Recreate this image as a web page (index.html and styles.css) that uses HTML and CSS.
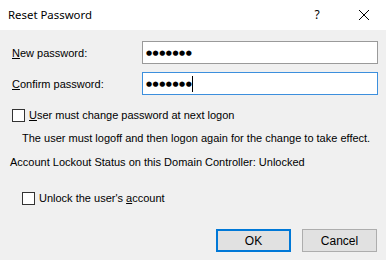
FILE: index.html
```html
<!DOCTYPE html>
<html>
<head>
<meta charset="utf-8">
<link rel="stylesheet" href="styles.css">
</head>
<body>
<div class="dialog">
  <div class="titlebar">
    <span class="title">Reset Password</span>
    <span class="help">?</span>
    <svg class="close" width="12" height="12" viewBox="0 0 12 12"><path d="M1 1 L11 11 M11 1 L1 11" stroke="#000" stroke-width="1" fill="none"/></svg>
  </div>
  <div class="content">
    <div class="field">
      <label class="label"><u>N</u>ew password:</label>
      <div class="input"><span class="dots">●●●●●●●</span></div>
    </div>
    <div class="field second">
      <label class="label"><u>C</u>onfirm password:</label>
      <div class="input focused"><span class="dots">●●●●●●●</span><span class="caret"></span></div>
    </div>
    <div class="check first-check">
      <span class="box"></span><span><u>U</u>ser must change password at next logon</span>
    </div>
    <div class="note">The user must logoff and then logon again for the change to take effect.</div>
    <div class="status">Account Lockout Status on this Domain Controller: Unlocked</div>
    <div class="check unlock">
      <span class="box"></span><span>Unlock the user's <u>a</u>ccount</span>
    </div>
    <div class="buttons">
      <button class="btn default">OK</button>
      <button class="btn">Cancel</button>
    </div>
  </div>
</div>
</body>
</html>
```
FILE: styles.css
```css
html, body {
  margin: 0;
  padding: 0;
}
body {
  width: 386px;
  height: 260px;
  overflow: hidden;
  background: #f0f0f0;
  font-family: "Liberation Sans", Arial, sans-serif;
  font-size: 11px;
  color: #000;
}
.dialog {
  width: 386px;
  height: 260px;
  display: flex;
  flex-direction: column;
}
.titlebar {
  flex-shrink: 0;
  height: 30px;
  background: #fff;
  display: flex;
  align-items: center;
  padding-left: 8px;
  box-sizing: border-box;
}
.title {
  flex: 1;
  font-family: "Noto Sans", "Open Sans", sans-serif;
  font-size: 11.4px;
  line-height: 16px;
  margin-top: -1px;
}
.help {
  font-family: "Noto Sans", "Open Sans", sans-serif;
  font-size: 12px;
  width: 10px;
  text-align: center;
  margin-right: 36px;
  line-height: 16px;
  margin-top: -1px;
}
.close {
  margin-right: 16px;
  margin-top: -1px;
}
.content {
  display: flex;
  flex-direction: column;
  padding-top: 11px;
}
.field {
  display: flex;
  align-items: center;
  height: 23px;
}
.field.second {
  margin-top: 8px;
}
.label {
  width: 142px;
  flex-shrink: 0;
  padding-left: 12px;
  box-sizing: border-box;
  line-height: 16px;
}
.input {
  width: 236px;
  height: 23px;
  box-sizing: border-box;
  border: 1px solid #9a9a9a;
  background: #fff;
  display: flex;
  align-items: center;
  padding-left: 3px;
}
.input.focused {
  border-color: #3c8fdd;
}
.dots {
  font-family: "DejaVu Sans", sans-serif;
  font-size: 7px;
  letter-spacing: 0.5px;
  line-height: 10px;
}
.caret {
  width: 1px;
  height: 16px;
  background: #000;
  margin-left: 0px;
}
.check {
  display: flex;
  align-items: center;
  line-height: 16px;
}
.first-check {
  margin-top: 12px;
  padding-left: 12px;
}
.box {
  width: 13px;
  height: 13px;
  box-sizing: border-box;
  border: 1px solid #333;
  background: #fff;
  margin-right: 4px;
}
.note {
  line-height: 16px;
  margin-top: 7px;
  padding-left: 22px;
  white-space: nowrap;
}
.status {
  line-height: 16px;
  margin-top: 8px;
  padding-left: 10px;
}
.unlock {
  margin-top: 20px;
  padding-left: 22px;
}
.buttons {
  display: flex;
  justify-content: flex-end;
  gap: 11px;
  padding-right: 9px;
  margin-top: 23px;
}
.btn {
  width: 75px;
  height: 23px;
  box-sizing: border-box;
  border: 1px solid #adadad;
  background: #e1e1e1;
  font-family: inherit;
  font-size: 12px;
  color: #000;
  padding: 0;
  margin: 0;
}
.btn.default {
  border: 2px solid #0078d7;
}
```
